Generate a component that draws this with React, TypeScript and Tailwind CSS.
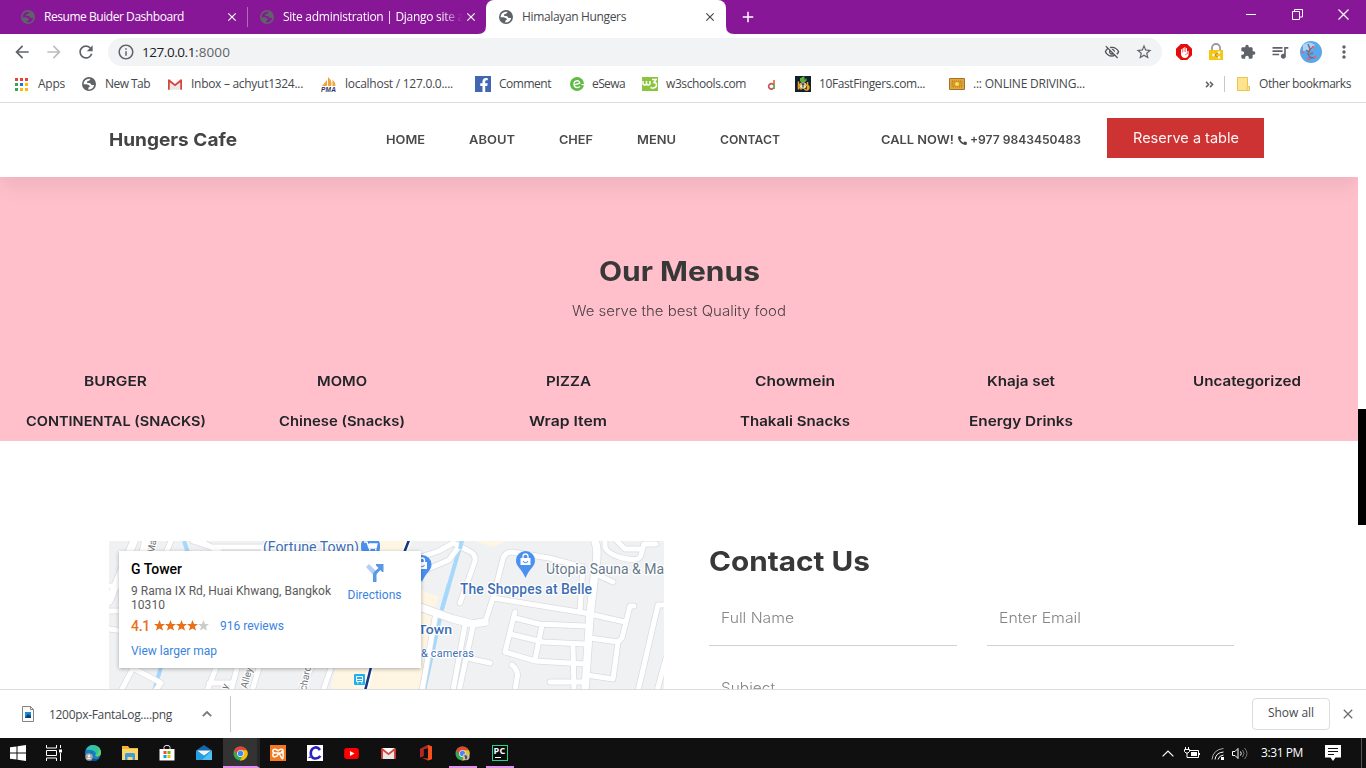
import { useLayoutEffect, useRef, type ReactNode } from "react";
import {
  MdAdd, MdArrowBack, MdArrowForward, MdClose, MdExtension, MdInfoOutline, MdMoreVert,
  MdOutlineVisibilityOff, MdQueueMusic, MdRefresh, MdStarBorder, MdFrontHand,
} from "react-icons/md";
import { FaPhone, FaFacebookF } from "react-icons/fa";

/* One line of text that fills the width of its box, by letter spacing or by stretching. */
function Fit({ children, className = "", stretch = false }: { children: string; className?: string; stretch?: boolean }) {
  const inner = useRef<HTMLSpanElement>(null);
  useLayoutEffect(() => {
    const el = inner.current;
    const box = el?.parentElement;
    if (!el || !box) return;
    el.style.letterSpacing = "0px";
    el.style.transform = "none";
    const have = el.getBoundingClientRect().width;
    const want = box.getBoundingClientRect().width;
    if (stretch) el.style.transform = `scaleX(${want / have})`;
    else el.style.letterSpacing = `${(want - have) / children.length}px`;
  }, [children, stretch]);
  return (
    <span className={`block shrink-0 whitespace-nowrap ${className}`}>
      <span ref={inner} className="inline-block origin-left">{children}</span>
    </span>
  );
}

const ui = "font-['Open_Sans','Noto_Sans',sans-serif]";
const brand = "font-[Inter,sans-serif]";

function Globe({ className }: { className: string }) {
  return (
    <svg viewBox="0 0 16 16" className={`size-4 ${className}`}>
      <path fillRule="evenodd" fill="currentColor" d="M8 1a7 7 0 1 0 0 14A7 7 0 0 0 8 1zM8.300 2.700 9.500 2.900 8.500 4.500 6.200 5.200 6 6.800 9.200 7.200 10.600 9H13.200A5.400 5.400 0 0 1 7.200 13.400L7.500 11.500 9 10.500 8.200 9.300 5.500 8.300H2.600A5.400 5.400 0 0 1 8.300 2.700z" />
    </svg>
  );
}

function Gmail({ className }: { className: string }) {
  return (
    <svg viewBox="0 0 16 12" className={className}>
      <path d="M1 0h14v12H1z" fill="#e8e8e8" />
      <path d="M2 1.500 8 7l6-5.500V0H2z" fill="#fff" />
      <path d="M0 1.200Q0 0 1.300 0L8 5.400 14.700 0Q16 0 16 1.200V12h-2V3.300L8 8 2 3.300V12H0z" fill="#d9453a" />
    </svg>
  );
}

function Chrome({ badge = false }: { badge?: boolean }) {
  return (
    <svg viewBox="0 0 16 16" className="size-[15px]">
      <circle cx="8" cy="8" r="7.500" fill="#34a853" />
      <path d="M1.300 4.600A7.500 7.500 0 0 1 14.700 4.600H8A3.400 3.400 0 0 0 4.900 9.500z" fill="#ea4335" />
      <path d="M14.800 4.600A7.500 7.500 0 0 1 7.300 15.500L11 9.600A3.400 3.400 0 0 0 9 4.600z" fill="#fbbc05" />
      <circle cx="8" cy="8" r="3.600" fill="#fff" />
      <circle cx="8" cy="8" r="2.900" fill="#4285f4" />
      {badge && <><circle cx="11.800" cy="11.500" r="3.700" fill="#c8bfb0" /><path d="M10 9.500l3 1v3.500h-2z" fill="#56504a" /></>}
    </svg>
  );
}

function Tabs() {
  return (
    <div className={`flex h-[34px] items-center bg-[#881798] text-[12px] text-white ${ui}`}>
      <div className="flex w-[247px] items-center pl-5">
        <Globe className="text-[#5f6368]" />
        <Fit className="ml-2 w-[140px]">Resume Buider Dashboard</Fit>
        <MdClose className="ml-[41px] size-[14px]" />
      </div>
      <div className="h-5 w-px bg-[#b36cbd]" />
      <div className="flex w-[238px] items-center pl-[11px]">
        <Globe className="text-[#5f6368]" />
        <div className="ml-2 w-[181px] overflow-hidden [mask-image:linear-gradient(to_right,black_158px,transparent_180px)]">
          <Fit className="w-[181px]">Site administration | Django site a</Fit>
        </div>
        <MdClose className="size-[14px]" />
      </div>
      <div className="relative flex h-[34px] w-[240px] items-center rounded-t-lg bg-white pl-3 text-[#45494d]">
        <svg viewBox="0 0 8 8" className="absolute bottom-0 -left-2 size-2"><path d="M8 0v8H0Q8 8 8 0z" fill="#fff" /></svg>
        <svg viewBox="0 0 8 8" className="absolute -right-2 bottom-0 size-2"><path d="M0 0v8h8Q0 8 0 0z" fill="#fff" /></svg>
        <Globe className="text-[#5f6368]" />
        <Fit className="ml-2 w-[104px]">Himalayan Hungers</Fit>
        <MdClose className="ml-[77px] size-[14px]" />
      </div>
      <MdAdd className="ml-[13px] size-[18px]" />
      <div className="ml-auto flex items-center pr-[17px] pb-1.5">
        <div className="h-px w-[10px] bg-white" />
        <svg viewBox="0 0 11 11" className="ml-[36px] size-[11px]" fill="none" stroke="#fff"><path d="M.5 2.500h7v8h-7zM2.500 2.500v-2h8v7.500h-3" /></svg>
        <svg viewBox="0 0 11 11" className="ml-[35px] size-[11px]" fill="none" stroke="#fff" strokeWidth="1.200"><path d="m.5.5 10 10M10.500.5l-10 10" /></svg>
      </div>
    </div>
  );
}

function Toolbar() {
  return (
    <div className="flex h-9 items-center text-[#5f6368]">
      <MdArrowBack className="ml-3 size-5" />
      <MdArrowForward className="ml-3 size-5 text-[#bbbdbf]" />
      <MdRefresh className="ml-3 size-5" />
      <div className={`ml-3 flex h-7 w-[1054px] items-center rounded-full bg-[#f1f3f4] text-[13.500px] ${ui}`}>
        <MdInfoOutline className="ml-[9px] size-[18px]" />
        <Fit className="ml-[7px] w-[53px] text-[#202124]">127.0.0.1</Fit>
        <Fit className="w-[35px]">:8000</Fit>
        <MdOutlineVisibilityOff className="ml-auto size-4 text-[#505458]" />
        <MdStarBorder className="mr-[9px] ml-[15px] size-[18px]" />
      </div>
      <div className="ml-[14px] grid size-4 place-items-center bg-[#e40d0d] text-white [clip-path:polygon(30%_0,70%_0,100%_30%,100%_70%,70%_100%,30%_100%,0_70%,0_30%)]">
        <MdFrontHand className="size-[11px]" />
      </div>
      <svg viewBox="0 0 16 18" className="ml-4 h-[18px] w-4">
        <path d="M4 7V5a4 4 0 0 1 8 0v2" fill="none" stroke="#9b9b9b" strokeWidth="1.800" />
        <path d="M1 7h14v10H1z" fill="#f5c518" />
        <path d="m11 9.500-5 2.500 5 2.500" fill="none" stroke="#a08c4a" /><g fill="#fff6c8"><circle cx="11" cy="9.500" r="1.400" /><circle cx="5.500" cy="12" r="1.400" /><circle cx="11" cy="14.500" r="1.400" /></g>
      </svg>
      <MdExtension className="ml-4 size-4" />
      <MdQueueMusic className="ml-[14px] size-[20px]" />
      <svg viewBox="0 0 22 22" className="ml-[10px] size-[22px]">
        <circle cx="11" cy="11" r="11" fill="#5ba7ea" /><path d="M3 4q6-5 12 0l-3 5-9 1z" fill="#a9d5f8" />
        <path d="m8 3 2 5-2 5 3 5m-1-9 3-3m-3 7 3-1m-4 4 5 1m-8-8 3 2" fill="none" stroke="#846a7c" strokeWidth="1.500" />
        <g fill="#e2646c"><circle cx="2.500" cy="11" r="1.300" /><circle cx="13" cy="6" r="1.200" /><circle cx="15" cy="16" r="1.200" /><circle cx="8" cy="18" r="1.200" /></g>
      </svg>
      <MdMoreVert className="ml-3 size-5" />
    </div>
  );
}

function AppsIcon() {
  const colors = ["fill-[#ea4335]", "fill-[#ea4335]", "fill-[#ea4335]", "fill-[#34a853]", "fill-[#1a73e8]", "fill-[#fbbc05]", "fill-[#34a853]", "fill-[#fbbc05]", "fill-[#fbbc05]"];
  return (
    <svg viewBox="0 0 13 13" className="ml-[15px] size-[13px]">
      {colors.map((c, i) => <rect key={i} x={(i % 3) * 5} y={Math.floor(i / 3) * 5} width="3" height="3" className={c} />)}
    </svg>
  );
}

function Bookmarks() {
  return (
    <div className={`flex h-[33px] items-center border-b border-[#dadce0] pb-1 text-[12px] text-[#45494d] ${ui}`}>
      <AppsIcon />
      <Fit className="ml-[10px] w-[27px]">Apps</Fit>
      <Globe className="ml-4 text-[#5f6368]" />
      <Fit className="ml-2 w-[45px]">New Tab</Fit>
      <Gmail className="ml-[18px] h-[11px] w-[14px]" />
      <Fit className="ml-[9px] w-[112px]">Inbox – achyut1324...</Fit>
      <svg viewBox="0 0 16 16" className="ml-[18px] size-4">
        <path d="M1 10 6 4v6zM7 10V1q5 4 3 9zM11.500 10V3.500q3 3 3 6.500z" fill="#f3a33c" />
        <text x="0" y="15.500" fontSize="6.500" fontWeight="bold" fontStyle="italic" textLength="15" fill="#343465" fontFamily="Liberation Sans">PMA</text>
      </svg>
      <Fit className="ml-2 w-[108px]">localhost / 127.0.0....</Fit>
      <div className="ml-[22px] flex size-4 items-end justify-end bg-[#4267b2] text-white"><FaFacebookF className="size-[14px]" /></div>
      <Fit className="ml-2 w-[52px]">Comment</Fit>
      <svg viewBox="0 0 14 14" className="ml-[19px] size-[14px]">
        <circle cx="7" cy="7" r="7" fill="#60bb46" /><path d="M4.500 7.800 9.800 6.200Q9.300 3.600 7 3.600 4 4 4 7.200T7.500 10.500q1.500 0 2.500-1.200" fill="none" stroke="#fff" strokeWidth="1.300" /><path d="M11.500 7H14v1.200h-2.500z" fill="#fff" />
      </svg>
      <Fit className="ml-2 w-[33px]">eSewa</Fit>
      <svg viewBox="0 0 16 14" className="ml-[17px] h-[14px] w-4">
        <path d="M0 0h16v14H0z" fill="#8bc43f" /><path d="M1 4v2q0 2 1.700 2T4.500 6V4v2q0 2 1.800 2T8 6V4M10 2.500h4L12 5.500q2.500 0 2.500 2.500T11.500 11 9.500 10" fill="none" stroke="#fff" strokeWidth="1.500" />
      </svg>
      <Fit className="ml-2 w-[80px]">w3schools.com</Fit>
      <svg viewBox="0 0 16 16" className="ml-[17px] size-4" fill="none" strokeWidth="1.700">
        <path d="M11 4v5" stroke="#e8683c" /><path d="M10.500 8.700A2.700 2.700 0 1 0 10.500 12" stroke="#c75252" /><path d="M11 8.500v4.500" stroke="#56a05a" />
      </svg>
      <svg viewBox="0 0 16 16" className="ml-4 size-4">
        <path d="M0 0h16v16H0z" fill="#10202c" /><path d="M5 5V2h1.500v1.500V1H8v2.500V.5h1.500V4l2-2v3l-2 1H6z" fill="#62ad3d" />
        <circle cx="8" cy="9.500" r="3.300" fill="#e9e3c8" /><path d="M3.500 5.500v8M3.500 10l3-3M3.500 10l3 3.500M12.500 6v8M10 9.500a2.500 2.500 0 1 1-.8 3" fill="none" stroke="#f1a51e" strokeWidth="1.500" /><path d="M8 7.500v4M6.500 8h3" stroke="#10202c" />
      </svg>
      <Fit className="ml-2 w-[106px]">10FastFingers.com...</Fit>
      <svg viewBox="0 0 16 12" className="ml-6 h-3 w-4">
        <path d="M.5.5h15v11H.5z" fill="#e0a93a" stroke="#a5702b" /><path d="M3 3h10v6H3z" fill="#d8982c" stroke="#b67c27" strokeDasharray="1 1" /><circle cx="8" cy="6" r="2" fill="#f7df5b" />
      </svg>
      <Fit className="ml-2 w-[112px]">.:: ONLINE DRIVING...</Fit>
      <svg viewBox="0 0 10 8" className="ml-[120px] h-[7px] w-[9px]" fill="none" stroke="#5f6368" strokeWidth="1.700"><path d="m1 1 3 3-3 3M5.500 1l3 3-3 3" /></svg>
      <div className="ml-[10px] h-4 w-px bg-[#c6c9cc]" />
      <svg viewBox="0 0 13 14" className="ml-3 h-[14px] w-[13px]"><path d="M.5.5h10v9h2v4H.5z" fill="#ffe48f" stroke="#ebc44d" /><path d="M10 9.500v4" stroke="#ebc44d" /></svg>
      <Fit className="ml-[9px] w-[92px]">Other bookmarks</Fit>
    </div>
  );
}

function SiteHeader() {
  return (
    <header className={`relative z-10 flex h-[74px] items-center bg-white text-[12px] font-semibold text-[#4a4a4a] shadow-[0_10px_20px_rgba(0,0,0,0.07)] ${brand}`}>
      <Fit stretch className="mb-0.5 ml-[109px] w-[128px] text-[18px] font-bold text-[#444]">Hungers Cafe</Fit>
      <Fit stretch className="ml-[149px] w-[39px]">HOME</Fit>
      <Fit stretch className="ml-[44px] w-[46px]">ABOUT</Fit>
      <Fit stretch className="ml-[44px] w-[34px]">CHEF</Fit>
      <Fit stretch className="ml-[44px] w-[39px]">MENU</Fit>
      <Fit stretch className="ml-[44px] w-[60px]">CONTACT</Fit>
      <Fit stretch className="ml-[101px] w-[73px]">CALL NOW!</Fit>
      <FaPhone className="ml-1 size-[9px] -scale-x-100" />
      <Fit stretch className="ml-[3px] w-[111px]">+977 9843450483</Fit>
      <button className="mb-[4px] ml-[26px] flex h-10 w-[157px] items-center justify-center bg-[#cd3333] text-[14.500px] font-normal text-[#fff5f5]">
        <Fit stretch className="w-[106px]">Reserve a table</Fit>
      </button>
    </header>
  );
}

function MenuName({ children, className }: { children: string; className: string }) {
  return <div className="flex h-10 items-center justify-center pl-[5px]"><Fit stretch className={className}>{children}</Fit></div>;
}

function Menus() {
  return (
    <section className={`flex h-[264px] flex-col items-center bg-[#ffc0cb] ${brand}`}>
      <h2 className="mt-[77px] flex h-9 items-center text-[27px] font-bold text-[#383838]"><Fit stretch className="w-[161px]">Our Menus</Fit></h2>
      <p className="mt-[11px] flex h-5 items-center text-[14.500px] font-light text-[#4a4144]"><Fit stretch className="w-[214px]">We serve the best Quality food</Fit></p>
      <div className="mt-10 grid w-full grid-cols-6 text-[13.500px] font-semibold text-[#212529]">
        <MenuName className="w-[63px]">BURGER</MenuName>
        <MenuName className="w-[50px]">MOMO</MenuName>
        <MenuName className="w-[45px]">PIZZA</MenuName>
        <MenuName className="w-[80px]">Chowmein</MenuName>
        <MenuName className="w-[68px]">Khaja set</MenuName>
        <MenuName className="w-[108px]">Uncategorized</MenuName>
        <MenuName className="w-[180px]">CONTINENTAL (SNACKS)</MenuName>
        <MenuName className="w-[126px]">Chinese (Snacks)</MenuName>
        <MenuName className="w-[78px]">Wrap Item</MenuName>
        <MenuName className="w-[110px]">Thakali Snacks</MenuName>
        <MenuName className="w-[104px]">Energy Drinks</MenuName>
      </div>
    </section>
  );
}

const wideRoads = "M486 0Q490 10 486 30L481 74 476 150M308 65 344 78 364 83 376 81M25 0 0 60M37 0 22 60";
const roads = [
  "M351 62 366 20Q367 13 360 10L344 2 330 10 300 20M312 31 340 19 348 8",
  "M376 81 384 57 394 18Q396 11 403 11L440 17 474 26 471 70",
  "M384 57 476 72 516 81M356 84 344 150M364 85 350 150M358 117 381 122M326 77 313 150",
  "M406 71 396 111 426 120 476 123M406 77 430 83 476 85M433 84 426 119M401 93 434 101 476 103",
  "M464 106 465 150M441 141H476M403 124Q410 130 408 137L406 150",
  "M525 65H521L513 97 509 101 504 138M481 97 509 101M477 134 504 138M489 34 504 41",
  "M557 64H549L529 150M557 117 548 150M496 0V6Q498 12 510 16 530 22 532 14L535 3H547M508 0 516 8 532 8",
  "M0 70H12M0 88 14 90M12 150 24 127M24 127 52 142 46 150M98 150 107 127M122 150 128 127M100 142H122M192 150 202 127M214 150 222 127M150 127 143 150",
  "M62 0 57 12M92 0 112 12M84 0 102 6 155 6 160 0M153 12 158 0M170 0 180 10M0 45H10",
];

function MapPin({ x, y }: { x: number; y: number }) {
  return (
    <g transform={`translate(${x} ${y})`}>
      <path d="M0 0A9.500 9.500 0 0 1 9.500 9.500C9.500 16 4 17 0 27C-4 17-9.500 16-9.500 9.500A9.500 9.500 0 0 1 0 0z" fill="#4a90f0" />
      <path d="M-5 7H5V14H-5z" fill="#fff" /><path d="M-2.500 7V5.500a2.500 2.500 0 0 1 5 0V7" fill="none" stroke="#fff" strokeWidth="1.300" /><path d="M-2.500 10q2.500 3.500 5 0" fill="none" stroke="#4a90f0" strokeWidth="1.200" />
    </g>
  );
}

function MapDrawing() {
  return (
    <svg viewBox="0 0 555 150" className="block h-[150px] w-[555px] bg-[#f0f1f3]" fontFamily="Roboto, sans-serif">
      <path d="M305 46 330 56 326 66 334 70 313 150H221L228 120H305zM365 0H398L384 6zM240 0H298L290 12H240z" fill="#fef6e3" />
      <path d="M353 -1 333 68 315 150M75 0 79 12M52 126 45 150" fill="none" stroke="#a6d8fc" strokeWidth="4" />
      <g fill="none" strokeLinecap="round" strokeLinejoin="round">
        <path d={wideRoads} stroke="#d9dce0" strokeWidth="9" />
        {roads.map((d) => <path key={d} d={d} stroke="#d9dce0" strokeWidth="6.500" />)}
        <path d={wideRoads} stroke="#fff" strokeWidth="7.500" />
        {roads.map((d) => <path key={d} d={d} stroke="#fff" strokeWidth="5" />)}
        <path d="M262 126 256 150M300 -1 295 12" stroke="#fff" strokeWidth="6" />
        <path d="M262 126 256 150M300 -1 295 12" stroke="#173580" strokeWidth="2.500" />
      </g>
      <path d="M353 -1 351 8M340 43 333 68" stroke="#a6d8fc" strokeWidth="4" />
      <rect x="245" y="133" width="11" height="11" rx="1" fill="#1fb0ec" />
      <path d="M247.500 135.500h6v5h-6zM248 142h1.500M252 142h1.500M247.500 138.500h6" fill="none" stroke="#fff" />
      <g fill="#fff" stroke="#fff" strokeWidth="2.500" paintOrder="stroke" strokeLinejoin="round">
        <text x="154" y="11" fontSize="14" textLength="96" lengthAdjust="spacingAndGlyphs" fill="#3c6eb4">(Fortune Town)</text>
        <text x="351" y="53" fontSize="14" fontWeight="500" textLength="132" fill="#3c6eb4">The Shoppes at Belle</text>
        <text x="309" y="93" fontSize="13.500" fontWeight="500" textLength="34" lengthAdjust="spacingAndGlyphs" fill="#3c6eb4">Town</text>
        <text x="312" y="116" fontSize="11" textLength="53" fill="#3c6eb4">&amp; cameras</text>
        <text x="437" y="33" fontSize="14" textLength="118" fill="#65788a">Utopia Sauna &amp; Ma</text>
        <g fontSize="10" fill="#70757a">
          <text transform="translate(45 13) rotate(-80)">Ma</text>
          <text transform="translate(138 148) rotate(-75)">Alley</text>
          <text transform="translate(197 150) rotate(-78)">chard</text>
          <text transform="translate(118 149) rotate(-65)">y</text>
        </g>
      </g>
      <rect x="252" y="-3" width="19" height="17" rx="7" fill="#4a90f0" />
      <path d="M255 1h3l2 6h7l1-4h-8" fill="none" stroke="#fff" strokeWidth="1.300" /><path d="M259 3h9l-1 4h-7zM260 8h1.500v1.500H260zM266 8h1.500v1.500H266z" fill="#fff" />
      <MapPin x={313} y={14} />
      <MapPin x={416.5} y={10} />
    </svg>
  );
}

function Star({ className = "" }: { className?: string }) {
  return (
    <svg viewBox="0 0 11 11" className={`size-[11px] ${className}`}>
      <path fill="currentColor" d="M5.500 0 7 3.900 11 4.100 7.900 6.600 9 10.600 5.500 8.400 2 10.600 3.100 6.600 0 4.100 4 3.900z" />
    </svg>
  );
}

function PlaceCard() {
  return (
    <div className="absolute top-[10px] left-[10px] flex h-[117px] w-[302px] bg-white pl-3 font-[Roboto,sans-serif] text-[12px] text-[#5b5b5b] shadow-[0_1px_4px_rgba(0,0,0,0.3)]">
      <div className="w-[200px]">
        <Fit className="mt-[9px] w-[51px] text-[14px] leading-[18px] font-medium text-black">G Tower</Fit>
        <Fit className="mt-[6px] w-[200px] leading-[14px]">9 Rama IX Rd, Huai Khwang, Bangkok</Fit>
        <Fit className="w-[34px] leading-[14px]">10310</Fit>
        <div className="mt-[6px] flex h-4 items-center">
          <Fit className="w-[19px] text-[14px] font-medium text-[#e7711b]">4.1</Fit>
          <div className="mb-px ml-[4px] flex text-[#e7711b]">
            <Star /><Star /><Star /><Star /><Star className="text-[#ccc]" />
          </div>
          <Fit className="ml-[11px] w-[64px] text-[#3a84df]">916 reviews</Fit>
        </div>
        <Fit className="mt-[9px] w-[86px] leading-4 text-[#3a84df]">View larger map</Fit>
      </div>
      <div className="ml-[16px] flex w-[55px] flex-col items-center text-[#3a84df]">
        <svg viewBox="0 0 20 20" className="mt-[12px] size-5">
          <path d="m1 4 3-3 7 7-3 4z" fill="#b6d0f4" /><path d="M8 19v-7q0-3 2-4l3.500-3L11 2.500V1h7.500v8H17l-1.500-2-3 3q-1 1-1 2v7z" fill="#5a97e4" />
        </svg>
        <Fit className="mt-[4px] w-[54px] leading-4">Directions</Fit>
      </div>
    </div>
  );
}

function Field({ children, className }: { children: ReactNode; className: string }) {
  return <div className={`flex h-[56px] items-center border-b border-[#ced0d2] pl-3 ${className}`}>{children}</div>;
}

function Contact() {
  return (
    <section className="flex pt-[100px] pl-[109px]">
      <div className="relative h-[150px] w-[555px] overflow-hidden"><MapDrawing /><PlaceCard /></div>
      <div className={`ml-[45px] text-[14.500px] font-light text-[#858585] ${brand}`}>
        <h2 className="mt-[3px] flex h-9 items-center text-[27px] font-bold text-[#383838]"><Fit stretch className="w-[161px]">Contact Us</Fit></h2>
        <div className="mt-[10px] flex gap-[30px]">
          <Field className="w-[248px]"><Fit stretch className="w-[73px]">Full Name</Fit></Field>
          <Field className="w-[247px]"><Fit stretch className="w-[82px]">Enter Email</Fit></Field>
        </div>
        <Field className="mt-[14px] w-full"><Fit stretch className="w-[54px]">Subject</Fit></Field>
      </div>
    </section>
  );
}

function DownloadBar() {
  return (
    <div className={`flex h-[49px] shrink-0 items-center border-t border-[#dadce0] bg-white pb-px text-[12px] text-[#45494d] ${ui}`}>
      <svg viewBox="0 0 12 16" className="ml-[22px] h-4 w-3">
        <path d="M.5.5h8l3 3v12H.5z" fill="#fafafa" stroke="#858585" /><path d="M8.500.5v3h3" fill="none" stroke="#858585" />
        <path d="M3 6h6v6H3z" fill="#1e87d6" /><path d="m3 12 3-4 3 2v2z" fill="#123e78" />
      </svg>
      <Fit className="mt-[3px] ml-[15px] w-[123px]">1200px-FantaLog....png</Fit>
      <svg viewBox="0 0 10 6" className="mt-px ml-[30px] h-[6px] w-[10px]" fill="none" stroke="#777a7d" strokeWidth="1.800"><path d="m.8 5.200 4.200-4.200 4.200 4.200" /></svg>
      <div className="ml-[18px] h-9 w-px bg-[#c6c9cc]" />
      <button className="ml-auto flex h-8 w-[78px] items-center justify-center rounded border border-[#dadce0] pb-px font-medium"><Fit className="w-[46px]">Show all</Fit></button>
      <MdClose className="mr-[10px] ml-[10px] size-4 text-[#6c7074]" />
    </div>
  );
}

function Slot({ children, className = "" }: { children: ReactNode; className?: string }) {
  return <div className={`grid h-[30px] w-[37px] place-items-center ${className}`}>{children}</div>;
}

function Taskbar() {
  return (
    <div className={`flex h-[30px] shrink-0 items-center bg-[#101010] text-white ${ui}`}>
      <Slot><svg viewBox="0 0 16 16" className="mr-px size-4" fill="#fff"><path d="M0 2.300 6.500 1.400v6.100H0zM7.500 1.200 16 0v7.500H7.500zM0 8.500h6.500v6.100L0 13.700zM7.500 8.500H16V16l-8.500-1.200z" /></svg></Slot>
      <Slot><svg viewBox="0 0 16 16" className="mr-[3px] size-4" fill="none" stroke="#fff"><path d="M.5 0v3h10V0M.5 5.500h10v5H.5zM.5 16v-3h10v3M14.500 0v3M14.500 8v8" /><path d="M13 4.500h3v3h-3z" fill="#fff" stroke="none" /></svg></Slot>
      <Slot><svg viewBox="0 0 16 16" className="size-4">
        <circle cx="8" cy="8" r="8" fill="#147dc6" /><path d="M1 5Q4-1 10 .3 16 2 16 8q-1 4-6 3 2-3-1-5-4-2-8-1z" fill="#35c1a3" /><path d="M12 1.500q5 4 3.500 8-2 3-5 1.500Q16 7 12 1.500z" fill="#64d65a" />
        <path d="M7 7q-2 3 0 6 3 2 7 1-3 3-7 1.800Q3 13 4.500 9z" fill="#124a8e" /><circle cx="4" cy="12" r="3.700" fill="#a8a8a8" /><circle cx="4" cy="11" r="1.300" fill="#eee" /><path d="M1.800 14q2-3 4.400 0z" fill="#eee" />
      </svg></Slot>
      <Slot><svg viewBox="0 0 16 14" className="h-[14px] w-4"><path d="M0 0h6l1.500 2H16v12H0z" fill="#f2b632" /><path d="M0 3h16v11H0z" fill="#fbd668" /><path d="M3 14V8.500Q3 7 4.500 7h7Q13 7 13 8.500V14h-2.500v-3h-5v3z" fill="#3d9be2" /></svg></Slot>
      <Slot><svg viewBox="0 0 16 16" className="size-4"><path d="M5 5V2.500Q5 .5 7 .5h2q2 0 2 2V5" fill="none" stroke="#ddd" /><path d="M.5 4h15v11.500H.5z" fill="#fff" /><path d="M4.500 6h3v3h-3z" fill="#f25022" /><path d="M8.500 6h3v3h-3z" fill="#7fba00" /><path d="M4.500 10h3v3h-3z" fill="#00a4ef" /><path d="M8.500 10h3v3h-3z" fill="#ffb900" /></svg></Slot>
      <Slot><svg viewBox="0 0 16 16" className="size-4"><path d="M0 5.500 8 0l8 5.500V15H0z" fill="#1468b2" /><path d="M1 5.500h14L8 11z" fill="#f4f6f8" /><path d="m0 5.500 8 5 8-5V15H0z" fill="#259fe3" /><path d="m16 5.500-10 9.500h10z" fill="#4ec1f3" /></svg></Slot>
      <Slot className="-mr-px ml-px border-r-[3px] border-b-2 border-r-[#262626] border-b-[#e58df0] bg-[#333] pt-0.5"><Chrome /></Slot>
      <Slot><svg viewBox="0 0 16 16" className="size-4"><path d="M0 0h16v16H0z" fill="#f47920" /><path d="M8 6.200Q7 4.200 5 4.200 2.800 4.200 2.800 6T5 8h6Q13.200 8 13.200 6T11 4.200 8 6.200M5 8Q2.800 8 2.800 10T5 11.800 8 9.500 11 11.800 13.200 10 11 8" fill="none" stroke="#fff" strokeWidth="1.500" /></svg></Slot>
      <Slot><svg viewBox="0 0 16 16" className="size-4"><path d="M0 0h16v16H0z" fill="#fff" /><path d="M13 5Q11 2 8 2.500 4 3.500 3.800 8T7.500 13.500Q11 14 13.500 11" fill="none" stroke="#2a22b8" strokeWidth="2.600" /><path d="m1 13 3-3 1 3z" fill="#4a3dd2" /></svg></Slot>
      <Slot><svg viewBox="0 0 16 12" className="h-[11px] w-[15px]"><rect width="16" height="12" rx="3" fill="#f00" /><path d="m6.300 3.200 5 2.800-5 2.800z" fill="#fff" /></svg></Slot>
      <Slot><Gmail className="h-[11px] w-[15px]" /></Slot>
      <Slot><svg viewBox="0 0 14 16" className="h-4 w-[14px]"><path d="m1 4 8-4 4 1.500v12.500L9 15.500 3 13l6 .5V3L4.500 4.300V11L1 12.500z" fill="#d83b01" /><path d="M1 4 9 0v3L4.500 4.300V11L1 12.500z" fill="#b4282c" /><path d="m9 0 4 1.500V14l-4 1.500z" fill="#f4511e" /></svg></Slot>
      <Slot><div className="grid h-[30px] w-[28px] place-items-center border-b-2 border-[#df94ea] pt-0.5"><Chrome badge /></div></Slot>
      <Slot><div className="grid h-[30px] w-[28px] place-items-center border-b-2 border-[#df94ea] pt-0.5">
        <div className="flex size-4 flex-col border border-[#21d789] bg-[#0a0a0a] pl-px"><Fit className="w-[12px] text-[9px] leading-[9px] font-bold">PC</Fit><div className="mt-[2px] ml-px h-px w-[6px] bg-white" /></div>
      </div></Slot>
      <svg viewBox="0 0 12 7" className="ml-auto h-[7px] w-3" fill="none" stroke="#fff" strokeWidth="1.200"><path d="m.6 6.400 5.400-5.400 5.400 5.400" /></svg>
      <svg viewBox="0 0 16 12" className="ml-[10px] h-3 w-4" fill="none" stroke="#fff"><path d="M5.500 3.500h9v7h-9M15.500 6v2M1.500 0v2.500M4.500 0v2.500M.5 2.500h5v2l-1.500 1.500h-2L.5 4.500zM3 6v4.500h3" /><path d="M7 5h6v4H7z" fill="#fff" stroke="none" /></svg>
      <svg viewBox="0 0 13 13" className="ml-[11px] size-[13px]" fill="none" stroke="#fff"><path d="M7 12.500Q8 8.500 12.500 8M4 12.500Q5 5.500 12.500 5" /><path d="M1 12.500Q2 2.500 12.500 1.500" stroke="#aaa" /><path d="M10 10h3v3h-3z" fill="#fff" stroke="none" /></svg>
      <svg viewBox="0 0 16 13" className="ml-[8px] h-[13px] w-4" fill="none" stroke="#fff"><path d="M.5 4.500h2.500l3-3v10l-3-3H.5zM8.500 4.500q1.500 2 0 4" /><path d="M10.500 3q3 3.500 0 7M12.500 1q5 5.500 0 11" stroke="#777" /></svg>
      <Fit className="ml-[13px] w-[42px] text-[12px]">3:31 PM</Fit>
      <svg viewBox="0 0 16 16" className="ml-[22px] size-4"><path d="M0 0h16v12.500h-5.500L8 16l-2.500-3.500H0z" fill="#fff" /><path d="M3 3.500h10M3 6.500h10M3 9.500h6" stroke="#101010" /></svg>
      <div className="mr-1 ml-5 h-[30px] w-px bg-[#555]" />
    </div>
  );
}

export default function App() {
  return (
    <div className="flex h-[768px] w-[1366px] flex-col overflow-hidden bg-white">
      <Tabs />
      <Toolbar />
      <Bookmarks />
      <div className="flex h-[586px] shrink-0 overflow-hidden">
        <main className="w-[1358px] overflow-hidden"><SiteHeader /><Menus /><Contact /></main>
        <div className="w-2 bg-white pt-[306px]"><div className="h-[116px] bg-black" /></div>
      </div>
      <DownloadBar />
      <Taskbar />
    </div>
  );
}
